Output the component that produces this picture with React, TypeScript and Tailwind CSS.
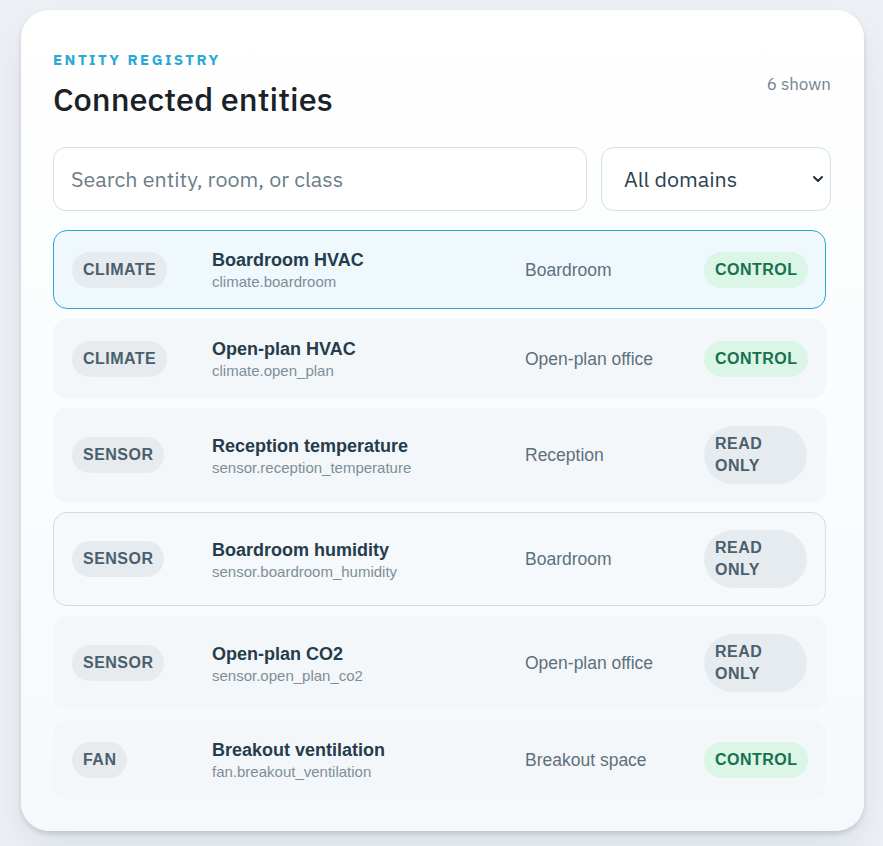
import React, { useState } from 'react';

type Entity = {
  domain: string;
  name: string;
  id: string;
  room: string;
  control: boolean;
  state?: 'selected' | 'hover';
};

const ENTITIES: Entity[] = [
  { domain: 'CLIMATE', name: 'Boardroom HVAC', id: 'climate.boardroom', room: 'Boardroom', control: true, state: 'selected' },
  { domain: 'CLIMATE', name: 'Open-plan HVAC', id: 'climate.open_plan', room: 'Open-plan office', control: true },
  { domain: 'SENSOR', name: 'Reception temperature', id: 'sensor.reception_temperature', room: 'Reception', control: false },
  { domain: 'SENSOR', name: 'Boardroom humidity', id: 'sensor.boardroom_humidity', room: 'Boardroom', control: false, state: 'hover' },
  { domain: 'SENSOR', name: 'Open-plan CO2', id: 'sensor.open_plan_co2', room: 'Open-plan office', control: false },
  { domain: 'FAN', name: 'Breakout ventilation', id: 'fan.breakout_ventilation', room: 'Breakout space', control: true },
];

const rowClass = (state?: Entity['state']) => {
  if (state === 'selected') return 'border-[#2aa7d2] bg-[#eef8fd]';
  if (state === 'hover') return 'border-[#c9dee7] bg-[#f5f9fb]';
  return 'border-transparent bg-[#f4f7fa]';
};

const EntityRow = ({ entity }: { entity: Entity }) => (
  <div
    className={`grid grid-cols-[124px_minmax(0,1fr)_163px_103px] items-center gap-4 rounded-[14px] border px-[18px] py-[17px] ${rowClass(entity.state)}`}
  >
    <div>
      <span className="inline-block rounded-full bg-[#e6ebef] px-[11px] py-[7px] text-[16px] font-bold leading-[22px] tracking-[0.03em] text-[#4a5e6c]">
        {entity.domain}
      </span>
    </div>
    <div className="min-w-0">
      <div className="text-[18px] font-bold leading-[24px] text-[#243c4b]">{entity.name}</div>
      <div className="text-[15px] leading-[19px] text-[#7f8e97]">{entity.id}</div>
    </div>
    <div className="text-[17.5px] leading-[22px] text-[#5e707c]">{entity.room}</div>
    <div>
      {entity.control ? (
        <span className="inline-block rounded-full bg-[#dbf5e7] px-[11px] py-[7px] text-[16px] font-bold leading-[22px] tracking-[0.03em] text-[#17714b]">
          CONTROL
        </span>
      ) : (
        <span className="inline-block w-full rounded-full bg-[#e6ebef] px-[11px] py-[7px] text-[16px] font-bold leading-[22px] tracking-[0.03em] text-[#4a5e6c]">
          READ ONLY
        </span>
      )}
    </div>
  </div>
);

export default function App() {
  const [query, setQuery] = useState('');
  const [domain, setDomain] = useState('all');

  return (
    <div className="min-h-[846px] bg-[#edf1f5] pl-[21px] pr-[19px] pt-[10px] pb-4 font-['Liberation_Sans',Arial,sans-serif]">
      <div className="rounded-[28px] bg-gradient-to-b from-white to-[#f6f9fb] pl-8 pr-[33px] pt-[41px] pb-8 shadow-[0_3px_5px_rgba(15,23,42,0.14),0_20px_40px_rgba(15,23,42,0.07)]">
        <div className="flex items-center justify-between font-['IBM_Plex_Sans','Noto_Sans',sans-serif]">
          <div>
            <div className="text-[15px] font-bold leading-[18px] tracking-[0.165em] text-[#27a9d6]">ENTITY REGISTRY</div>
            <h1 className="mt-[11px] text-[32.5px] font-medium leading-[38px] text-[#1a2228]">Connected entities</h1>
          </div>
          <div className="text-[17px] text-[#74838d]">6 shown</div>
        </div>

        <div className="mt-[29px] flex gap-[14px] font-['IBM_Plex_Sans','Noto_Sans',sans-serif]">
          <input
            value={query}
            onChange={(e) => setQuery(e.target.value)}
            placeholder="Search entity, room, or class"
            className="h-[64px] min-w-0 flex-1 rounded-[13px] border border-[#cfe1e9] bg-white px-[17px] text-[21.5px] text-[#2b4150] outline-none placeholder:text-[#6c7d88]"
          />
          <div className="relative w-[230px]">
            <select
              value={domain}
              onChange={(e) => setDomain(e.target.value)}
              className="h-[64px] w-full appearance-none rounded-[13px] border border-[#cfe1e9] bg-white pl-[22px] text-[21.5px] text-[#2b4150] outline-none"
            >
              <option value="all">All domains</option>
              <option value="climate">Climate</option>
              <option value="sensor">Sensor</option>
              <option value="fan">Fan</option>
            </select>
            <svg
              className="pointer-events-none absolute right-[7px] top-1/2 -translate-y-1/2"
              width="12"
              height="8"
              viewBox="0 0 12 8"
              fill="none"
            >
              <path d="M2 2l4 4 4-4" stroke="#22313b" strokeWidth="2" strokeLinecap="round" strokeLinejoin="round" />
            </svg>
          </div>
        </div>

        <div className="mt-[19px] flex w-[773px] flex-col gap-[10px]">
          {ENTITIES.map((e) => (
            <EntityRow key={e.id} entity={e} />
          ))}
        </div>
      </div>
    </div>
  );
}
